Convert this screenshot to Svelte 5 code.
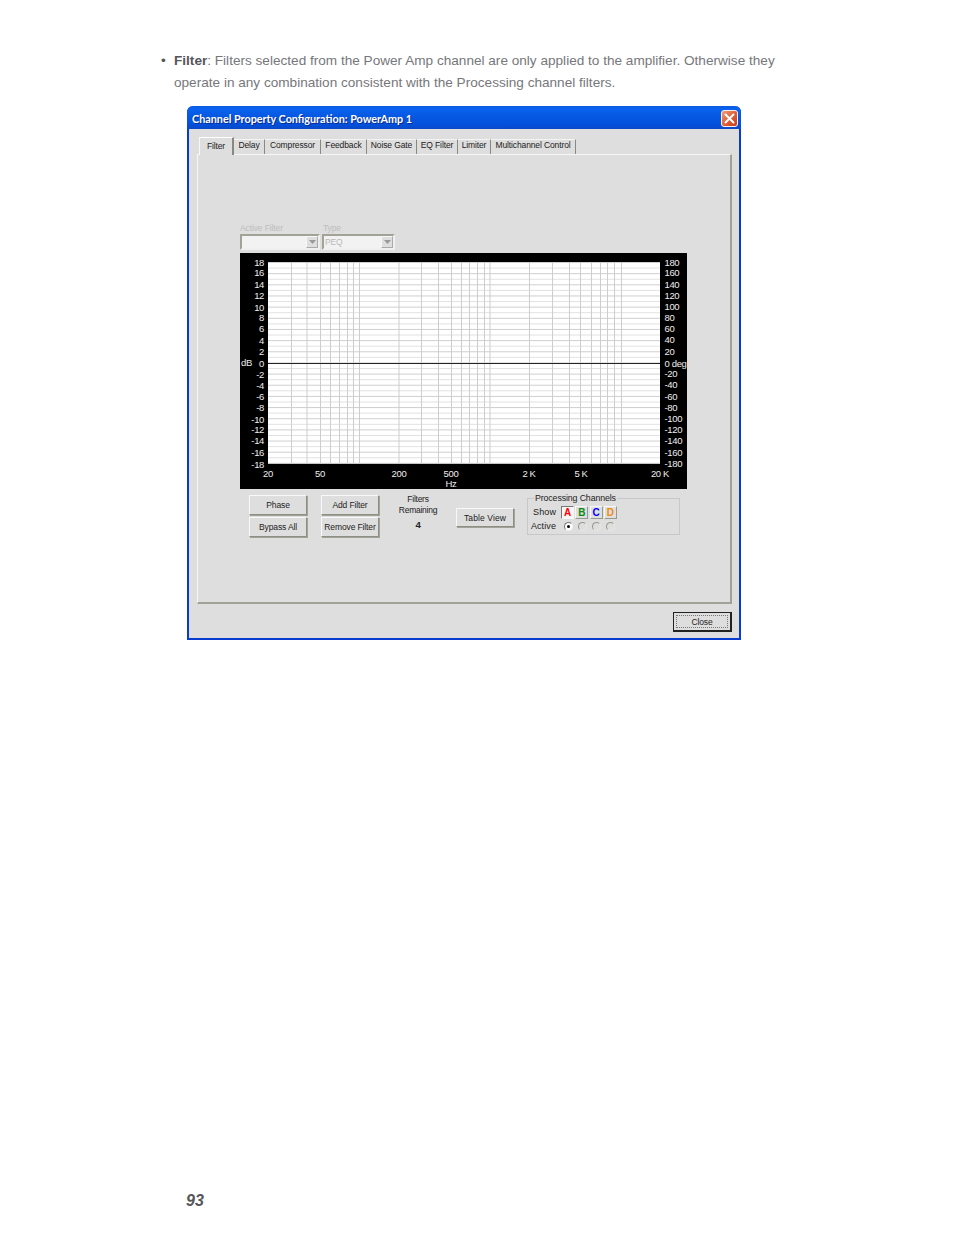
<script>
  const tabs = ['Filter','Delay','Compressor','Feedback','Noise Gate','EQ Filter','Limiter','Multichannel Control'];
  const vx = [291.5,307,320.5,330.5,339.5,347.5,353.5,359.5,399,421.5,438.5,451.5,461.5,469.5,477.5,484.5,490,529.5,552.5,569.5,580.5,591.5,600.5,607.5,614.5,621.5];
  const hy = Array.from({length:37},(_,i)=>262.5+i*5.58);
  const left = [['18',263],['16',273],['14',285],['12',296],['10',308],['8',318],['6',329],['4',341],['2',352],['0',364],['-2',375],['-4',386],['-6',397],['-8',408],['-10',420],['-12',430],['-14',441],['-16',453],['-18',465]];
  const right = [['180',263],['160',273],['140',285],['120',296],['100',307],['80',318],['60',329],['40',340],['20',352],['0 deg',364],['-20',374],['-40',385],['-60',397],['-80',408],['-100',419],['-120',430],['-140',441],['-160',453],['-180',464]];
  const bottom = [['20',268],['50',320],['200',399],['500',451],['2 K',529],['5 K',581],['20 K',660]];
  const channels = [['A','red','on'],['B','green',''],['C','blue',''],['D','orange','']];
</script>

<div class="page">
  <div class="bullet">
    <span class="dot">•</span>
    <p><b>Filter</b>: Filters selected from the Power Amp channel are only applied to the amplifier. Otherwise they operate in any combination consistent with the Processing channel filters.</p>
  </div>

  <section class="window">
    <header class="title">
      <span>Channel Property Configuration: PowerAmp 1</span>
      <svg class="x" viewBox="0 0 17 17" width="17" height="17" aria-hidden="true">
        <defs><linearGradient id="xg" x1="0" y1="0" x2="1" y2="1"><stop offset="0" stop-color="#f0a080"/><stop offset=".5" stop-color="#e0603a"/><stop offset="1" stop-color="#c83a18"/></linearGradient></defs>
        <rect x=".5" y=".5" width="16" height="16" rx="2.5" fill="url(#xg)" stroke="#f4f0ee"/>
        <path d="M4.5 4.5l8 8M12.5 4.5l-8 8" stroke="#fff" stroke-width="2" stroke-linecap="round"/>
      </svg>
    </header>
    <div class="body">
      <nav class="tabs">
        {#each tabs as t, i}
          <div class="tab" class:active={i===0}>{t}</div>
        {/each}
      </nav>
      <div class="panel">
        <div class="labels"><span class="l1">Active Filter</span><span>Type</span></div>
        <div class="combos">
          <div class="combo c1"><span></span><i><svg viewBox="0 0 7 4" width="7" height="4"><path d="M0 0h7L3.5 4z" fill="#9a9a94"/></svg></i></div>
          <div class="combo c2"><span>PEQ</span><i><svg viewBox="0 0 7 4" width="7" height="4"><path d="M0 0h7L3.5 4z" fill="#9a9a94"/></svg></i></div>
        </div>
        <svg class="chart" width="447" height="236" viewBox="240 253 447 236">
          <rect x="240" y="253" width="447" height="236" fill="#000"/>
          <rect x="268" y="262.5" width="392" height="201" fill="#fff"/>
          {#each hy as y, i}
            <line x1="268" x2="660" y1={y} y2={y} stroke={i%2 ? '#e2e2e2' : '#cfcfcf'} />
          {/each}
          {#each vx as x}
            <line x1={x} x2={x} y1="262.5" y2="463.5" stroke="#cdcdcd" />
          {/each}
          <line x1="268" x2="660" y1="363.5" y2="363.5" stroke="#222"/>
          <g class="lbl">
            {#each left as [t,y]}<text x="264" y={y+3} text-anchor="end">{t}</text>{/each}
            <text x="241" y="366">dB</text>
            {#each right as [t,y]}<text x="664.5" y={y+3}>{t}</text>{/each}
            {#each bottom as [t,x]}<text x={x} y="477" text-anchor="middle">{t}</text>{/each}
            <text x="451" y="487" text-anchor="middle">Hz</text>
          </g>
        </svg>
        <div class="controls">
          <div class="stack s1">
            <button>Phase</button>
            <button>Bypass All</button>
          </div>
          <div class="stack s2">
            <button>Add Filter</button>
            <button>Remove Filter</button>
          </div>
          <div class="remain">
            <div>Filters</div><div>Remaining</div><b>4</b>
          </div>
          <button class="table">Table View</button>
          <fieldset class="group">
            <legend>Processing Channels</legend>
            <div class="row show">
              <span class="cap">Show</span>
              {#each channels as [c,col,on]}
                <span class="ch {col}" class:on={on==='on'}>{c}</span>
              {/each}
            </div>
            <div class="row active">
              <span class="cap">Active</span>
              {#each channels as [c,col,on]}
                <span class="radio" class:sel={on==='on'}></span>
              {/each}
            </div>
          </fieldset>
        </div>
      </div>
      <div class="foot"><button class="close"><span>Close</span></button></div>
    </div>
  </section>

  <div class="pageno">93</div>
</div>

<style>
  :global(body){margin:0;background:#fff}
  .page{width:954px;height:1235px;box-sizing:border-box;padding-top:50px;font-family:"Liberation Sans",Arial,sans-serif;display:flex;flex-direction:column;position:relative}
  .bullet{display:flex;margin-left:161px;width:640px;color:#77777b;font-size:13.6px;line-height:22px}
  .dot{width:13px;flex:none;color:#555}
  .bullet p{margin:0;width:606px}
  .bullet b{color:#55555a}
  .window{margin:12px 0 0 187px;width:554px;height:534px;box-sizing:border-box;border:2px solid #0a3bd0;border-top:0;border-radius:6px 6px 0 0;background:#dedede;display:flex;flex-direction:column;font-size:8.5px;letter-spacing:-.12px;color:#222;}
  .title{height:23px;margin:0 -2px;flex:none;box-sizing:border-box;padding:0 3px 0 5px;border-radius:6px 6px 0 0;background:linear-gradient(#0a5ae0 0,#0a62ee 12%,#0658e2 45%,#0450dc 80%,#0a48c8 100%);display:flex;align-items:center;justify-content:space-between;color:#fff;font:bold 10.8px Lato,"Liberation Sans",sans-serif;text-shadow:1px 1px 0 #0a2a90;letter-spacing:0}
  .title span{padding-top:2px}
  .x{display:block;margin-top:1px}
  .body{flex:1;padding:8px 7px 6px 8px;display:flex;flex-direction:column;min-height:0}
  .tabs{display:grid;grid-template-columns:35px 31px 56px 46px 50px 41px 33px 85px;margin-left:2px;height:18px;align-items:end;position:relative;z-index:1;margin-bottom:-1px}
  .tab{height:15px;line-height:11px;text-align:center;border-top:1px solid #f4f4f4;border-right:1px solid #8a897f;box-sizing:border-box;white-space:nowrap;margin-bottom:1px}
  .tab.active{height:18px;line-height:17px;margin-bottom:0;background:#dedede;border-left:1px solid #f8f8f8;border-top:1px solid #fff;border-right:2px solid #8a897f}
  .panel{width:535px;height:450px;flex:none;box-sizing:border-box;padding:67px 0 0 42px;border:1px solid #f6f6f6;border-right:2px solid #a3a298;border-bottom:2px solid #a3a298;}
  .labels{height:12px;line-height:12px;color:#bdbdbd;display:flex}
  .l1{width:83px}
  .combos{display:flex;gap:2px;height:16px;margin-bottom:3px}
  .combo{box-sizing:border-box;height:16px;border:2px solid;border-color:#a3a298 #f0f0f0 #f0f0f0 #a3a298;background:#f2f2f2;display:flex;justify-content:space-between;align-items:center;color:#b8b8b8;padding-left:1px}
  .c1{width:80px}.c2{width:73px}
  .combo i{width:12px;height:12px;background:#dedede;border:1px solid;border-color:#f8f8f8 #aaa #aaa #f8f8f8;box-sizing:border-box;display:flex;align-items:center;justify-content:center}
  .chart{display:block}
  .lbl text{font:9.5px "Liberation Sans",Arial,sans-serif;fill:#eee;letter-spacing:-.35px}
  .controls{display:flex;margin:6px 0 0 9px;align-items:flex-start;height:44px}
  button{font:8.5px "Liberation Sans",Arial,sans-serif;letter-spacing:-.12px;color:#222;background:#dedede;border:1px solid;border-color:#f8f8f8 #8f8e85 #8f8e85 #f8f8f8;box-shadow:1px 1px 0 #a3a298;padding:0;box-sizing:border-box;white-space:nowrap}
  .stack{display:flex;flex-direction:column;gap:2px}
  .stack button{height:20px}
  .s1{width:58px;margin-right:14px}
  .s2{width:58px;margin-right:1px}
  .remain{width:76px;text-align:center;line-height:11px;margin-top:-1px;letter-spacing:-.25px}
  .remain b{display:block;margin-top:3px;font-size:9.5px}
  .table{width:58px;height:19px;margin:13px 1px 0 0;letter-spacing:.1px}
  .group{width:153px;height:42px;margin:-2px 0 0 12px;box-sizing:border-box;border:1px solid #c8c8c8;padding:0;position:relative;min-width:0;display:block}
  .group legend{padding:0 1px;margin-left:6px;line-height:10px;font-size:8.8px}
  .row{display:flex;align-items:center;height:14px}
  .show{margin-top:2px}
  .cap{width:33px;text-align:right;box-sizing:border-box;padding-right:5px;font-size:9px;letter-spacing:.1px;white-space:nowrap}
  .active .cap{width:35.5px;padding-right:7.5px}
  .ch{width:13px;height:13px;margin-right:1.3px;box-sizing:border-box;border:1px solid;border-color:#f8f8f8 #99988f #99988f #f8f8f8;text-align:center;font:bold 10px/12px "Liberation Sans",sans-serif}
  .ch.on{background:#f6f6f6;border-color:#777 #f8f8f8 #f8f8f8 #777}
  .red{color:#f00}.green{color:#0a8a0a}.blue{color:#00f}.orange{color:#f08a10}
  .radio{width:9px;height:9px;border-radius:50%;box-sizing:border-box;border:1px solid;border-color:#98978c #e8e8e0 #e8e8e0 #98978c;background:#dedede;margin-right:5px;position:relative}
  .radio.sel{background:#fff;border-color:#777 #eee #eee #777}
  .radio.sel::after{content:"";position:absolute;left:2px;top:2px;width:3px;height:3px;border-radius:50%;background:#000}
  .foot{display:flex;justify-content:flex-end;margin-top:8px}
  .close{width:59px;height:20px;border:1px solid #222;box-shadow:none;padding:2px;border-right-width:2px;border-bottom-width:2px}
  .close span{display:block;height:100%;line-height:12px;box-sizing:border-box;border:1px dotted #777}
  .pageno{position:absolute;left:186px;top:1192px;font:italic bold 16px "Liberation Sans",Arial,sans-serif;color:#55555a}
</style>
